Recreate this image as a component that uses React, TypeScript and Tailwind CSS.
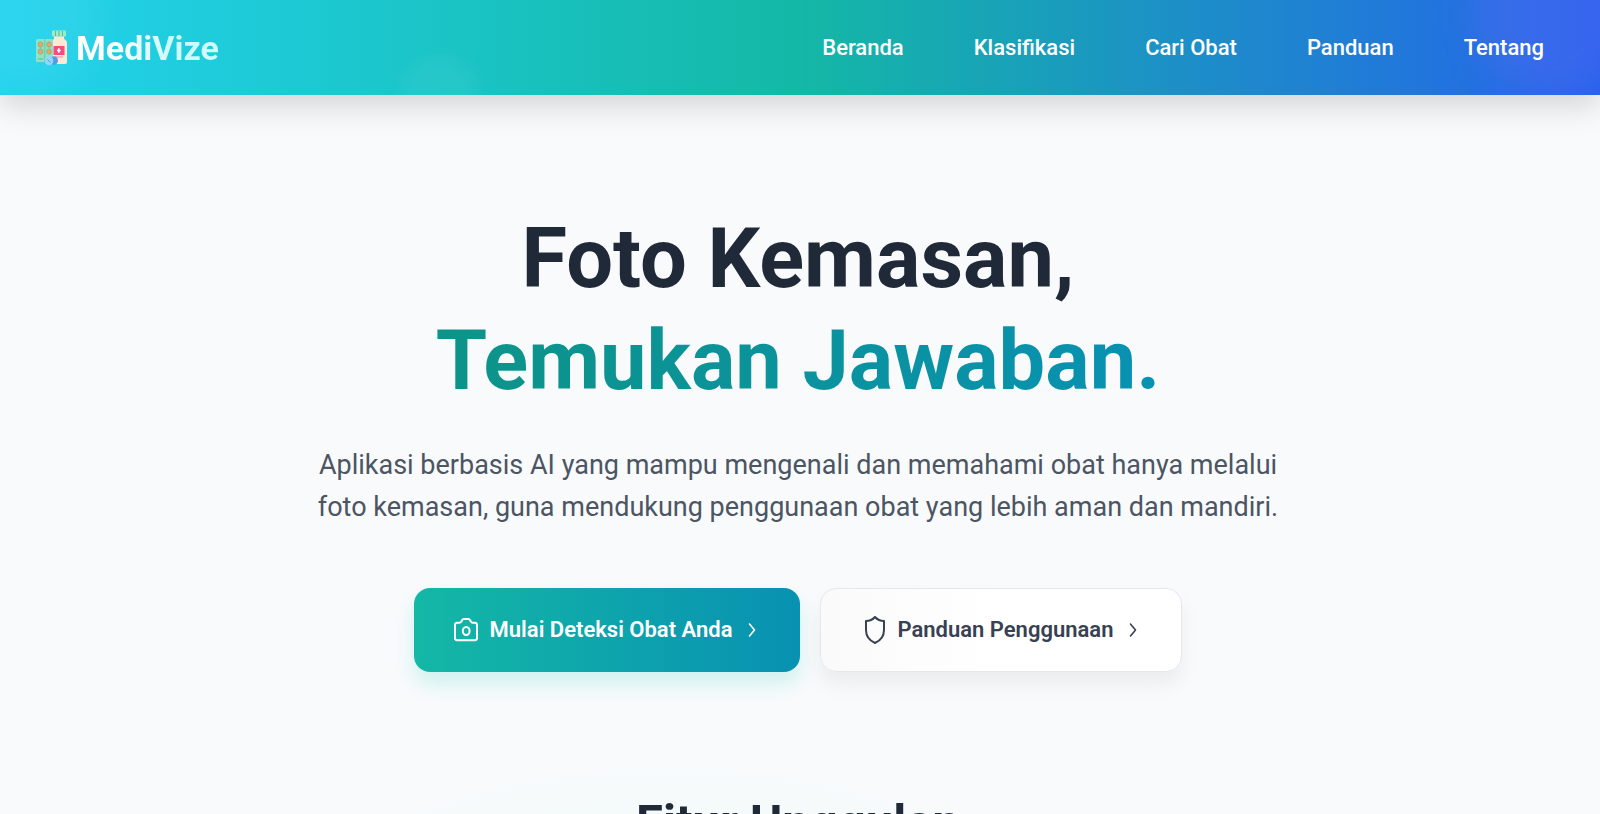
const links = ["Beranda", "Klasifikasi", "Cari Obat", "Panduan", "Tentang"];

function Logo() {
  return (
    <svg width="32" height="36" viewBox="0 0 32 36" aria-hidden="true">
      <rect x="16" y="0.5" width="14" height="6" rx="1" fill="#9cebc4" />
      <path d="M19.5 1v5M23 1v5M26.5 1v5" stroke="#4cc3a0" strokeWidth="1" />
      <path d="M18 6.5h10v1.7c0 1.2 3 2 3 4.300v19.500c0 1.200-.8 2-2 2H18c-1.200 0-2-.8-2-2V12.500c0-2.300 2-3.100 2-4.300z" fill="#fde8d4" />
      <rect x="0" y="9" width="17" height="23" rx="1.500" fill="#8fe3c4" />
      <path d="M8.800 9v23" stroke="#5cc9a8" strokeWidth="1" />
      <path d="M2 29h5" stroke="#4fbf9f" strokeWidth="1" />
      <g fill="#f2a35a" stroke="#74b596" strokeWidth="0.8">
        <ellipse cx="4.600" cy="14.500" rx="2.300" ry="2.700" />
        <ellipse cx="13" cy="14.500" rx="2.300" ry="2.700" />
        <ellipse cx="4.600" cy="21.500" rx="2.300" ry="2.700" />
        <ellipse cx="13" cy="21.500" rx="2.300" ry="2.700" />
      </g>
      <rect x="17.500" y="16" width="11" height="9" fill="#fb4a7e" />
      <path d="M19 27h8" stroke="#f0879c" strokeWidth="1" />
      <path d="M22.800 18.300v4.400M21 20.500h3.600" stroke="#fff" strokeWidth="1.600" />
      <ellipse cx="18" cy="30.500" rx="4" ry="4.300" fill="#4f9bea" />
      <ellipse cx="13" cy="30.800" rx="4.300" ry="4.500" fill="#93d6fb" />
      <path d="M11.500 29.500l3 3" stroke="#4a9fe0" strokeWidth="1" />
    </svg>
  );
}

function Camera() {
  return (
    <svg width="24" height="24" viewBox="0 0 24 24" fill="none" stroke="currentColor" strokeWidth="2" strokeLinecap="round" strokeLinejoin="round" aria-hidden="true">
      <path d="M1 7a2 2 0 0 1 2-2.200h2.500c1 0 1.400-.4 1.900-1.300l.6-1.200C8.500 1.400 9 1 9.800 1h4.600c.8 0 1.300.4 1.800 1.300l.6 1.200c.5.900.9 1.300 1.900 1.300H21A2 2 0 0 1 23 7v13a2 2 0 0 1-2 2.200H3A2 2 0 0 1 1 20z" />
      <ellipse cx="12.200" cy="13" rx="3.400" ry="4" />
    </svg>
  );
}

function Shield() {
  return (
    <svg width="20" height="28" viewBox="0 0 20 28" fill="none" stroke="currentColor" strokeWidth="2" strokeLinecap="round" strokeLinejoin="round" aria-hidden="true">
      <path d="M10 1c2.200 2.500 5.300 4 9 4v9c0 6-3.300 10.500-9 13-5.700-2.500-9-7-9-13V5c3.700 0 6.800-1.500 9-4z" />
    </svg>
  );
}

function Chevron() {
  return (
    <svg width="8" height="14" viewBox="0 0 8 14" fill="none" stroke="currentColor" strokeWidth="1.6" strokeLinecap="round" strokeLinejoin="round" aria-hidden="true">
      <path d="M1.500 1L6.500 7l-5 6" />
    </svg>
  );
}

export default function App() {
  return (
    <div className="min-h-screen overflow-hidden bg-[#f9fafc] font-['Roboto',sans-serif] text-[#1f2937]">
      <header className="relative flex items-center justify-between bg-linear-to-r/srgb from-[#22d3ee] via-[#14b8a6] to-[#2563eb] pr-14 pl-9 shadow-[0_12px_28px_rgba(0,0,0,0.14)]">
        <div className="pointer-events-none absolute inset-0 overflow-hidden" aria-hidden="true">
          <div className="absolute -top-16 -left-14 size-40 rounded-full bg-white/5 blur-lg" />
          <div className="absolute -bottom-10 left-[25%] size-20 rounded-full bg-white/5 blur-sm" />
          <div className="absolute -top-16 -right-8 size-40 rounded-full bg-[#8070ff]/20 blur-lg" />
        </div>
        <a href="#beranda" className="relative flex h-[95px] items-center gap-2">
          <Logo />
          <span className="bg-linear-to-r/srgb from-white from-25% to-[#cffafe] to-65% bg-clip-text text-[34px] leading-10 font-bold text-transparent">MediVize</span>
        </a>
        <nav className="relative flex items-center gap-[70px] text-[22px] leading-8 font-medium text-white">
          {links.map((label) => (
            <a key={label} href="#">{label}</a>
          ))}
        </nav>
      </header>

      <main className="pr-1">
        <section className="flex flex-col items-center px-6 pt-[113px] text-center">
          <h1 className="text-[83px] leading-[102px] font-bold">
            Foto Kemasan,
            <span className="block bg-linear-to-r/srgb from-[#0d9488] to-[#0891b2] bg-clip-text text-transparent">Temukan Jawaban.</span>
          </h1>
          <p className="mt-8 max-w-[980px] text-[27px] leading-[42px] text-[#4b5563]">
            Aplikasi berbasis AI yang mampu mengenali dan memahami obat hanya melalui foto kemasan, guna mendukung penggunaan obat yang lebih aman dan mandiri.
          </p>
          <div className="mt-[60px] flex items-center gap-5 text-[22px] leading-8 font-semibold">
            <button type="button" className="flex h-[84px] items-center gap-3 rounded-2xl bg-linear-to-r/srgb from-[#14b8a6] to-[#0891b2] pr-11 pl-10 text-white shadow-[0_12px_20px_rgba(45,212,191,0.2)]">
              <Camera />
              <span className="pr-1">Mulai Deteksi Obat Anda</span>
              <Chevron />
            </button>
            <button type="button" className="flex h-[84px] items-center gap-3 rounded-2xl border border-[#e5e7eb] bg-linear-to-r/srgb from-[#fafafb] to-white to-50% px-11 text-[#374151] shadow-[0_12px_20px_rgba(0,0,0,0.06)]">
              <Shield />
              <span className="pr-1">Panduan Penggunaan</span>
              <Chevron />
            </button>
          </div>
        </section>

        <section className="mt-4 bg-[radial-gradient(ellipse_400px_140px_at_42%_90%,#f1faf9,transparent)] pt-[100px] pb-10 text-center">
          <h2 className="text-[49px] leading-[70px] font-bold">Fitur Unggulan</h2>
        </section>
      </main>
    </div>
  );
}
